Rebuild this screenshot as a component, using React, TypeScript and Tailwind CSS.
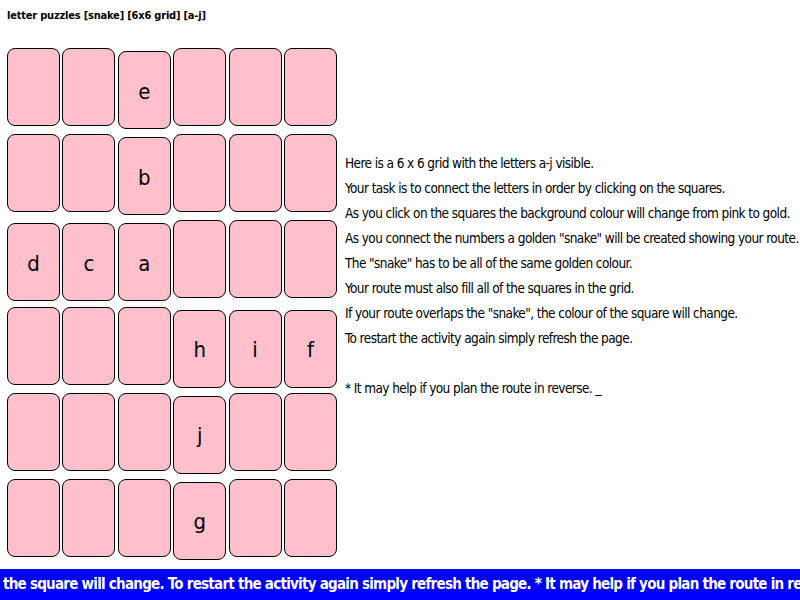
const grid: string[][] = [
  ["", "", "e", "", "", ""],
  ["", "", "b", "", "", ""],
  ["d", "c", "a", "", "", ""],
  ["", "", "", "h", "i", "f"],
  ["", "", "", "j", "", ""],
  ["", "", "", "g", "", ""],
];

const lines = [
  "Here is a 6 x 6 grid with the letters a-j visible.",
  "Your task is to connect the letters in order by clicking on the squares.",
  "As you click on the squares the background colour will change from pink to gold.",
  'As you connect the numbers a golden "snake" will be created showing your route.',
  'The "snake" has to be all of the same golden colour.',
  "Your route must also fill all of the squares in the grid.",
  'If your route overlaps the "snake", the colour of the square will change.',
  "To restart the activity again simply refresh the page.",
];

const narrow = "font-['DejaVu_Sans_Condensed','DejaVu_Sans',sans-serif]";

function Cell({ letter }: { letter: string }) {
  return (
    <div
      className={`flex h-[78px] w-[53px] items-center justify-center rounded-[8px] border border-black bg-[#ffc0cb] pt-[2px] text-[22px] font-light text-black ${
        letter ? "translate-y-[3px]" : ""
      }`}
    >
      {letter}
    </div>
  );
}

export default function App() {
  return (
    <div className={`relative h-[600px] w-[800px] overflow-hidden bg-white ${narrow}`}>
      <div className="px-[7px] pt-[8px] text-[11px] font-bold leading-[16px] tracking-[-0.2px] text-black">
        letter puzzles [snake] [6x6 grid] [a-j]
      </div>

      <div className="flex pt-[24px]">
        <div className="flex flex-col gap-y-[8.2px] pl-[7px]">
          {grid.map((row, r) => (
            <div key={r} className="flex items-start gap-x-[2.4px]">
              {row.map((l, c) => (
                <Cell key={c} letter={l} />
              ))}
            </div>
          ))}
        </div>

        <div className="whitespace-nowrap pl-[8px] pt-[103px] text-[13.5px] leading-[25px] tracking-[-0.58px] text-black">
          {lines.map((t) => (
            <div key={t}>{t}</div>
          ))}
          <div className="h-[25px]" />
          <div>* It may help if you plan the route in reverse. _</div>
        </div>
      </div>

      <div className="absolute bottom-0 left-0 right-0 h-[31px] overflow-hidden whitespace-nowrap bg-[#0000ff] pl-[3px] text-[15px] font-bold leading-[31px] tracking-[-0.75px] text-white">
        the square will change. To restart the activity again simply refresh the page. * It may help if you plan the
        route in reve
      </div>
    </div>
  );
}
